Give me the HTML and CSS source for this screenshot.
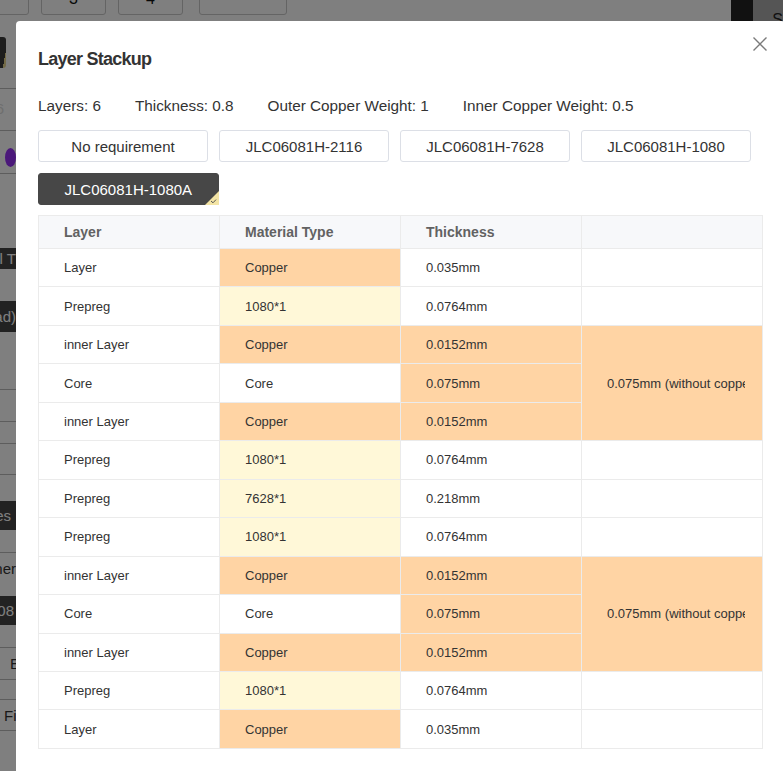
FILE: index.html
```html
<!DOCTYPE html>
<html lang="en">
<head>
<meta charset="utf-8">
<title>Layer Stackup</title>
<link rel="stylesheet" href="styles.css">
</head>
<body>
<div class="page">
  <div class="topbar">
    <span class="pg-btn first"></span>
    <span class="pg-btn num">3</span>
    <span class="pg-btn num">4</span>
    <span class="pg-btn wide"></span>
    <span class="tb-dark"></span>
    <span class="tb-grey">S</span>
  </div>
  <div class="main">
    <div class="side">
      <div class="sr h16"></div>
      <div class="sr h31"><span class="chip"></span></div>
      <div class="sr h20"></div>
      <div class="sr h42 line faint">6</div>
      <div class="sr h43 line"><span class="radio"></span></div>
      <div class="sr h75 line"></div>
      <div class="sr h21 dark end">l T</div>
      <div class="sr h32"></div>
      <div class="sr h31 dark end">(Lead)</div>
      <div class="sr h57"></div>
      <div class="sr h32 line"></div>
      <div class="sr h22 line"></div>
      <div class="sr h31 line"></div>
      <div class="sr h27 line"></div>
      <div class="sr h29 dark end pad5">Yes</div>
      <div class="sr h22"></div>
      <div class="sr h32 line end">Inner</div>
      <div class="sr h12"></div>
      <div class="sr h29 dark end pad2">1.08</div>
      <div class="sr h22"></div>
      <div class="sr h32 line start pad10">E</div>
      <div class="sr h20 line"></div>
      <div class="sr h31 line start pad4">Fi</div>
      <div class="sr h20 line"></div>
    </div>
  </div>
</div>

<div class="mask"></div>

<div class="dialog" role="dialog" aria-label="Layer Stackup">
  <h2 class="dialog-title">Layer Stackup</h2>
  <button class="close" aria-label="Close">
    <svg width="16" height="16" viewBox="0 0 16 16"><path d="M1.5 1.5 L14.5 14.5 M14.5 1.5 L1.5 14.5" stroke="#7a7a7a" stroke-width="1.4" fill="none"/></svg>
  </button>
  <div class="info">
    <span>Layers: 6</span>
    <span>Thickness: 0.8</span>
    <span>Outer Copper Weight: 1</span>
    <span>Inner Copper Weight: 0.5</span>
  </div>
  <div class="options">
    <button class="opt">No requirement</button>
    <button class="opt">JLC06081H-2116</button>
    <button class="opt">JLC06081H-7628</button>
    <button class="opt">JLC06081H-1080</button>
    <button class="opt active">JLC06081H-1080A
      <svg class="badge" width="14" height="14" viewBox="0 0 14 14"><polygon points="14,0 14,14 0,14" fill="#f3e4a5"/><path d="M6 10 L8 11.8 L11 8.6" stroke="#555" stroke-width="1" fill="none"/></svg>
    </button>
  </div>
  <table class="stack">
    <thead>
      <tr><th>Layer</th><th>Material Type</th><th>Thickness</th><th></th></tr>
    </thead>
    <tbody>
      <tr><td>Layer</td><td class="cu">Copper</td><td>0.035mm</td><td></td></tr>
      <tr><td>Prepreg</td><td class="pp">1080*1</td><td>0.0764mm</td><td></td></tr>
      <tr><td>inner Layer</td><td class="cu">Copper</td><td class="cu">0.0152mm</td><td class="cu note" rowspan="3"><div class="clip">0.075mm (without copper)</div></td></tr>
      <tr><td>Core</td><td>Core</td><td class="cu">0.075mm</td></tr>
      <tr><td>inner Layer</td><td class="cu">Copper</td><td class="cu">0.0152mm</td></tr>
      <tr><td>Prepreg</td><td class="pp">1080*1</td><td>0.0764mm</td><td></td></tr>
      <tr><td>Prepreg</td><td class="pp">7628*1</td><td>0.218mm</td><td></td></tr>
      <tr><td>Prepreg</td><td class="pp">1080*1</td><td>0.0764mm</td><td></td></tr>
      <tr><td>inner Layer</td><td class="cu">Copper</td><td class="cu">0.0152mm</td><td class="cu note" rowspan="3"><div class="clip">0.075mm (without copper)</div></td></tr>
      <tr><td>Core</td><td>Core</td><td class="cu">0.075mm</td></tr>
      <tr><td>inner Layer</td><td class="cu">Copper</td><td class="cu">0.0152mm</td></tr>
      <tr><td>Prepreg</td><td class="pp">1080*1</td><td>0.0764mm</td><td></td></tr>
      <tr><td>Layer</td><td class="cu">Copper</td><td>0.035mm</td><td></td></tr>
    </tbody>
  </table>
</div>
</body>
</html>
```

FILE: styles.css
```css
* { box-sizing: border-box; }
html, body { margin: 0; height: 100%; }
body {
  font-family: "Liberation Sans", Arial, sans-serif;
  color: #333;
  background: #fff;
  overflow: hidden;
}

/* background page (behind the mask) */
.page { height: 771px; }
.topbar { display: flex; height: 21px; }
.pg-btn {
  flex: none;
  height: 32px;
  margin-top: -17px;
  border: 1px solid #c8c8c8;
  border-radius: 3px;
  background: #fff;
  display: flex;
  align-items: center;
  justify-content: center;
  font-size: 16px;
  color: #111;
  width: 65px;
  margin-left: 12px;
}
.pg-btn.first { margin-left: -36px; }
.pg-btn.wide { width: 88px; margin-left: 16px; }
.tb-dark { flex: none; width: 22px; height: 21px; background: #222; margin-left: auto; }
.tb-grey {
  flex: none; width: 30px; height: 21px; background: #aaa; color: #222;
  font-size: 16px; line-height: 40px; text-align: right; overflow: hidden;
}
.main { display: flex; }
.side { width: 16px; display: flex; flex-direction: column; }
.sr {
  flex: none;
  display: flex;
  align-items: center;
  overflow: hidden;
  white-space: nowrap;
  font-size: 15px;
  color: #333;
}
.sr.line { border-top: 1px solid #bbb; }
.sr.dark { background: #444; color: #fff; }
.sr.end { justify-content: flex-end; }
.sr.start { justify-content: flex-start; }
.sr.pad2 { padding-right: 2px; }
.sr.pad5 { padding-right: 5px; }
.sr.pad4 { padding-left: 4px; }
.sr.pad10 { padding-left: 10px; }
.sr.faint { color: #ddd; justify-content: flex-end; padding-right: 12px; align-items: flex-start; padding-top: 11px; }
.h12 { height: 12px; } .h16 { height: 16px; } .h20 { height: 20px; } .h21 { height: 21px; }
.h22 { height: 22px; } .h27 { height: 27px; } .h29 { height: 29px; } .h31 { height: 31px; }
.h32 { height: 32px; } .h42 { height: 42px; } .h43 { height: 43px; } .h57 { height: 57px; }
.h75 { height: 75px; }
.chip {
  width: 6px; height: 31px; border-radius: 0 3px 3px 0;
  background: linear-gradient(to bottom right, #3a3a3a 72%, #e6d48e 72%);
}
.radio {
  width: 19px; height: 19px; border-radius: 50%;
  background: #9630f5; margin-left: 5px; align-self: flex-start; margin-top: 17px;
}

/* mask + dialog */
.mask { position: fixed; inset: 0; background: rgba(0, 0, 0, 0.5); }
.dialog {
  position: fixed;
  top: 21px;
  left: 16px;
  width: 769px;
  height: 800px;
  background: #fff;
  border-radius: 4px;
  padding: 26px 22px 0;
}
.dialog-title {
  margin: 0;
  font-size: 18px;
  line-height: 24px;
  font-weight: bold;
  letter-spacing: -0.75px;
  color: #333;
}
.close {
  position: absolute;
  top: 15px;
  right: 17px;
  width: 16px;
  height: 16px;
  padding: 0;
  border: 0;
  background: none;
  cursor: pointer;
}
.close svg { display: block; }

.info {
  display: flex;
  gap: 34px;
  margin-top: 25px;
  font-size: 15.3px;
  line-height: 20px;
  color: #333;
}

.options {
  display: flex;
  flex-wrap: wrap;
  gap: 11px 11px;
  margin-top: 14px;
  width: 725px;
}
.opt {
  position: relative;
  min-width: 170px;
  height: 32px;
  padding: 0 25px;
  border: 1px solid #dcdfe6;
  border-radius: 3px;
  background: #fff;
  font-family: "Liberation Sans", Arial, sans-serif;
  font-size: 15px;
  color: #333;
  cursor: pointer;
}
.opt.active {
  background: #474747;
  border-color: #474747;
  color: #fff;
  padding: 0 25.5px;
}
.badge { position: absolute; right: -1px; bottom: -1px; display: block; }

.stack {
  margin-top: 10px;
  width: 725px;
  table-layout: fixed;
  border-collapse: collapse;
}
.stack th, .stack td {
  border: 1px solid #ebebeb;
  padding: 0 25px;
  text-align: left;
  vertical-align: middle;
}
.stack th {
  height: 33px;
  background: #f7f8fa;
  font-size: 14px;
  font-weight: bold;
  color: #626262;
}
.stack td {
  height: 38.46px;
  font-size: 13px;
  color: #333;
}
.stack td.cu { background: #ffd4a4; }
.stack td.pp { background: #fff8d8; }
.stack td.note { padding-right: 17px; }
.clip { overflow: hidden; white-space: nowrap; }
```
